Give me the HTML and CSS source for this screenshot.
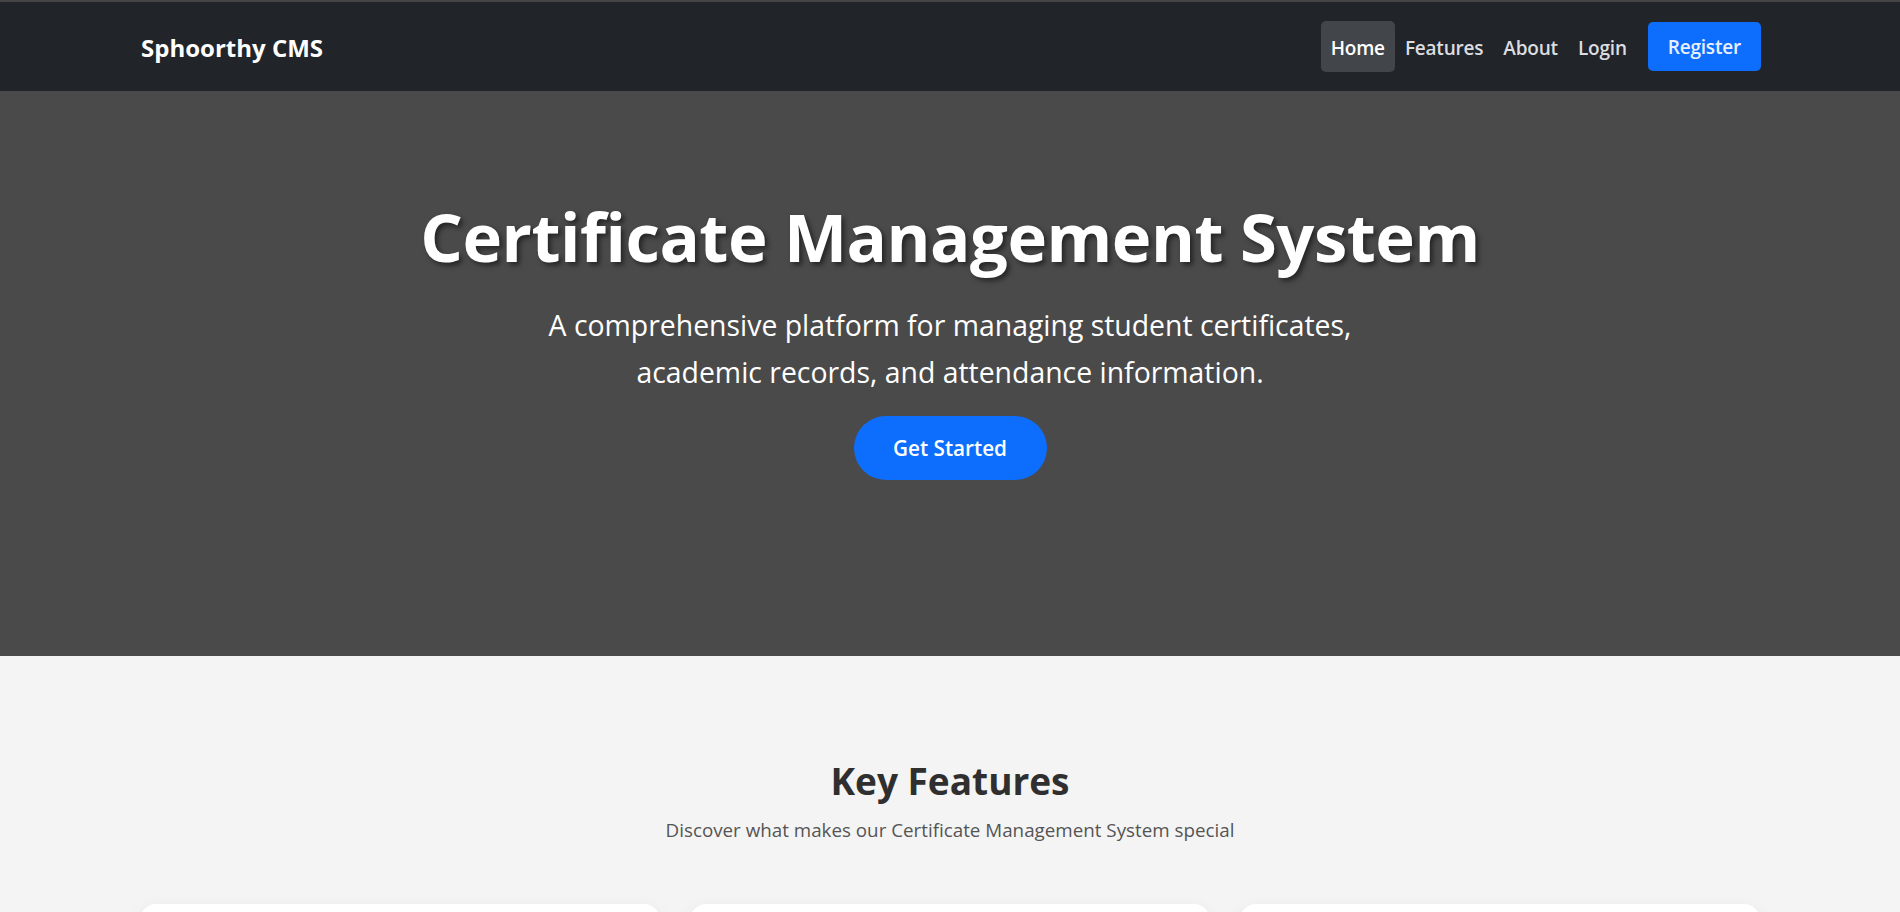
FILE: index.html
```html
<!DOCTYPE html>
<html lang="en">
<head>
<meta charset="utf-8">
<title>Sphoorthy CMS</title>
<link rel="stylesheet" href="styles.css">
</head>
<body>
<nav class="navbar">
  <div class="nav-inner">
    <a class="brand" href="#">Sphoorthy CMS</a>
    <ul class="nav-links">
      <li><a class="nav-link active" href="#">Home</a></li>
      <li><a class="nav-link" href="#">Features</a></li>
      <li><a class="nav-link" href="#">About</a></li>
      <li><a class="nav-link" href="#">Login</a></li>
      <li><a class="btn-register" href="#">Register</a></li>
    </ul>
  </div>
</nav>
<header class="hero">
  <h1 class="hero-title">Certificate Management System</h1>
  <p class="hero-sub">A comprehensive platform for managing student certificates,<br>academic records, and attendance information.</p>
  <a class="btn-start" href="#">Get Started</a>
</header>
<section class="features">
  <h2 class="features-title">Key Features</h2>
  <p class="features-sub">Discover what makes our Certificate Management System special</p>
  <div class="cards">
    <div class="card"></div>
    <div class="card"></div>
    <div class="card"></div>
  </div>
</section>
</body>
</html>
```
FILE: styles.css
```css
* { box-sizing: border-box; }
html, body { margin: 0; padding: 0; }
body {
  font-family: "Open Sans", "Noto Sans", sans-serif;
  background: #f4f4f4;
  overflow: hidden;
  height: 912px;
}
a { text-decoration: none; }

.navbar {
  background: #212529;
  border-top: 2px solid #454545;
  height: 91px;
}
.nav-inner {
  height: 100%;
  padding: 0 139px 0 141px;
  display: flex;
  align-items: center;
  justify-content: space-between;
}
.brand {
  color: #fff;
  font-weight: 700;
  font-size: 24px;
  padding-top: 2px;
}
.nav-links {
  list-style: none;
  margin: 0;
  padding: 0;
  display: flex;
  align-items: center;
}
.nav-link {
  display: block;
  color: #dcdde0;
  font-weight: 600;
  font-size: 19px;
  line-height: 30px;
  padding: 12px 10px 9px;
  border-radius: 5px;
  letter-spacing: -0.2px;
}
.nav-link.active {
  color: #fff;
  background: #42454a;
}
.btn-register {
  display: block;
  margin-left: 11px;
  background: #0d6efd;
  color: #e8f0ff;
  font-weight: 600;
  font-size: 19px;
  line-height: 30px;
  padding: 10px 20px 9px;
  border-radius: 5px;
  letter-spacing: -0.2px;
}

.hero {
  background: #4a4a4a;
  color: #fff;
  text-align: center;
  padding: 97px 0 176px;
}
.hero-title {
  margin: 0 0 18px;
  font-size: 67px;
  line-height: 96px;
  font-weight: 700;
  letter-spacing: -0.5px;
  text-shadow: 3px 3px 5px rgba(0,0,0,0.5);
}
.hero-sub {
  margin: 0 0 20px;
  font-size: 28.4px;
  line-height: 47px;
  font-weight: 400;
}
.btn-start {
  display: inline-block;
  background: #0d6efd;
  color: #fff;
  font-weight: 600;
  font-size: 20.7px;
  line-height: 64px;
  height: 64px;
  width: 193px;
  border-radius: 32px;
}

.features {
  padding: 97px 140px 0;
  text-align: center;
}
.features-title {
  margin: 0 0 7px;
  font-size: 37px;
  line-height: 55px;
  font-weight: 700;
  color: #2f2f2f;
}
.features-sub {
  margin: 0 0 59px;
  font-size: 18.8px;
  line-height: 30px;
  color: #555;
}
.cards {
  display: grid;
  grid-template-columns: repeat(3, 1fr);
  gap: 30px;
}
.card {
  background: #fff;
  height: 300px;
  border-radius: 16px;
  box-shadow: 0 6px 18px rgba(0,0,0,0.08);
}
```
